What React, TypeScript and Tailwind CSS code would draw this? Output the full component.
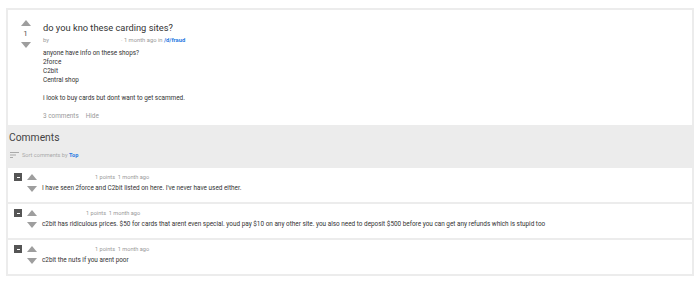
import React from "react";

const Up = ({ c = "#9e9e9e" }: { c?: string }) => (
  <svg width="10" height="6" viewBox="0 0 10 6"><path d="M0 6 L5 0 L10 6 Z" fill={c} /></svg>
);
const Down = ({ c = "#9e9e9e" }: { c?: string }) => (
  <svg width="10" height="6" viewBox="0 0 10 6"><path d="M0 0 L5 6 L10 0 Z" fill={c} /></svg>
);

const comments = [
  { pad: "pl-[58px]", text: "I have seen 2force and C2bit listed on here. I've never have used either." },
  { pad: "pl-[49px]", text: "c2bit has ridiculous prices. $50 for cards that arent even special. youd pay $10 on any other site. you also need to deposit $500 before you can get any refunds which is stupid too" },
  { pad: "pl-[58px]", text: "c2bit the nuts if you arent poor" },
];

export default function App() {
  return (
    <div className="w-[700px] h-[284px] bg-white pt-[8px] px-[6px]" style={{ fontFamily: "Roboto, sans-serif" }}>
      <div className="bg-[#ececec] p-[2px] flex flex-col">
        <div className="bg-white flex h-[115px]">
          <div className="w-[35px] flex flex-col items-center pt-[10px]">
            <Up />
            <div className="text-[8px] text-[#555] leading-[10px] my-[3px]">1</div>
            <Down />
          </div>
          <div className="flex flex-col pt-[12px]">
            <div className="text-[9.3px] text-[#333] leading-[12px]">do you kno these carding sites?</div>
            <div className="text-[5.8px] text-[#999] leading-[10px] mt-[1px] flex">
              <span>by</span>
              <span className="ml-[72px]">· 1 month ago in <span className="text-[#2a7ae2] font-bold">/d/fraud</span></span>
            </div>
            <div className="text-[6.4px] text-[#333] leading-[9px] mt-[4px]">
              <div>anyone have info on these shops?</div>
              <div>2force</div>
              <div>C2bit</div>
              <div>Central shop</div>
              <div className="h-[9px]" />
              <div>i look to buy cards but dont want to get scammed.</div>
            </div>
            <div className="text-[6.4px] text-[#999] leading-[9px] mt-[9px] flex gap-[7px]">
              <span>3 comments</span><span>Hide</span>
            </div>
          </div>
        </div>
        <div className="h-[43px] px-[1px] pt-[6px]">
          <div className="text-[10.3px] text-[#444] leading-[14px]">Comments</div>
          <div className="flex items-center gap-[3px] mt-[6px] pl-[1px]">
            <svg width="9" height="6" viewBox="0 0 9 6"><rect x="0" y="0" width="9" height="1" fill="#aaa"/><rect x="0" y="2.5" width="6" height="1" fill="#aaa"/><rect x="0" y="5" width="3" height="1" fill="#aaa"/></svg>
            <span className="text-[5.6px] text-[#aaa]">Sort comments by <span className="text-[#2a7ae2] font-bold">Top</span></span>
          </div>
        </div>
        <div className="flex flex-col gap-[2px]">
          {comments.map((c, i) => (
            <div key={i} className="bg-white h-[34px] flex pl-[6px] pt-[5px]">
              <div className="w-[8px] h-[8px] bg-[#555] flex items-center justify-center mt-[0px]">
                <div className="w-[3px] h-[1px] bg-white" />
              </div>
              <div className="flex flex-col ml-[5px]">
                <div className="flex items-center h-[8px]">
                  <Up />
                  <span className={`text-[5.6px] text-[#999] ${c.pad}`}>1 points&nbsp;&nbsp;1 month ago</span>
                </div>
                <div className="flex items-center mt-[3px]">
                  <Down />
                  <span className="text-[6.4px] text-[#333] ml-[5px]">{c.text}</span>
                </div>
              </div>
            </div>
          ))}
        </div>
      </div>
    </div>
  );
}
